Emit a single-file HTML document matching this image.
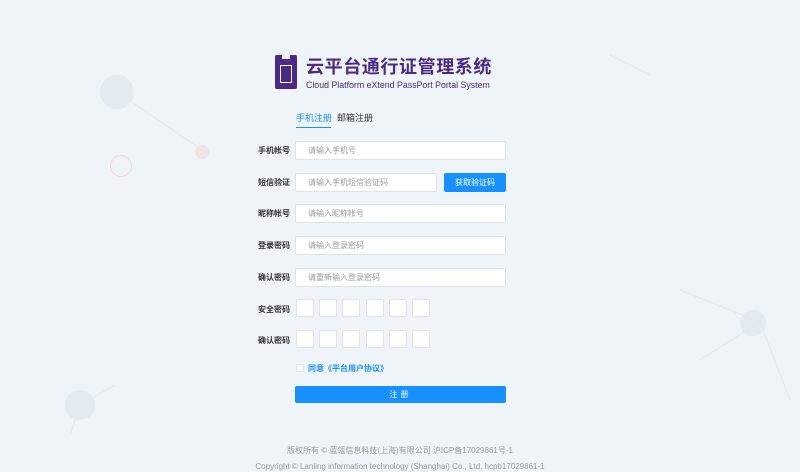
<!DOCTYPE html><html><head><meta charset="utf-8"><style>
body{margin:0;width:800px;height:472px;background:#eef4f8;font-family:"Liberation Sans","Noto Sans CJK SC",sans-serif;position:relative;overflow:hidden}
.a{position:absolute}
.lbl{position:absolute;left:258px;font-size:8px;color:#333;font-weight:bold}
.in{position:absolute;left:295px;width:209px;height:17px;background:#fff;border:1px solid #dde3e8;border-radius:2px;font-size:8px;color:#999;line-height:17px;text-indent:12px}
.bx{position:absolute;width:16px;height:16px;background:#fff;border:1px solid #dde3e8;border-radius:2px}
.dot{position:absolute;border-radius:50%;background:#e3eaf0}
</style></head><body>
<div class="dot" style="left:100px;top:75px;width:34px;height:34px"></div>
<div class="dot" style="left:110px;top:155px;width:20px;height:20px;border:1px solid #f3d6d6;background:none"></div>
<div class="dot" style="left:195px;top:145px;width:14px;height:14px;background:#f3e2e2"></div>
<div class="dot" style="left:65px;top:390px;width:30px;height:30px"></div>
<div class="dot" style="left:740px;top:310px;width:26px;height:26px"></div>
<svg class="a" style="left:0;top:0" width="800" height="472"><g stroke="#e1e8ee" stroke-width="1" fill="none"><line x1="117" y1="92" x2="205" y2="152"/><line x1="610" y1="55" x2="650" y2="75"/><line x1="680" y1="290" x2="760" y2="322"/><line x1="760" y1="322" x2="790" y2="400"/><line x1="700" y1="360" x2="760" y2="322"/><line x1="80" y1="405" x2="115" y2="385"/><line x1="80" y1="405" x2="70" y2="435"/></g></svg>
<div class="a" style="left:275px;top:55px;width:22px;height:34px;background:#4b2a85;border-radius:2px"></div>
<div class="a" style="left:282px;top:55px;width:8px;height:4px;background:#eef4f8"></div>
<div class="a" style="left:280px;top:65px;width:12px;height:18px;border:1.5px solid #fff;box-sizing:border-box"></div>
<div class="a" style="left:306px;top:57px;font-size:18px;line-height:20px;font-weight:bold;color:#4b2a85;letter-spacing:0.6px;white-space:nowrap">云平台通行证管理系统</div>
<div class="a" style="left:306px;top:80px;font-size:8.8px;line-height:10px;color:#4b2a85;white-space:nowrap">Cloud Platform eXtend PassPort Portal System</div>
<div class="a" style="left:296px;top:111px;font-size:9px;color:#1890ff">手机注册</div>
<div class="a" style="left:337px;top:111px;font-size:9px;color:#333">邮箱注册</div>
<div class="a" style="left:296px;top:127px;width:35px;height:1px;background:#1890ff"></div>
<div class="lbl" style="top:145px">手机帐号</div><div class="in" style="top:141px">请输入手机号</div>
<div class="lbl" style="top:177px">短信验证</div><div class="in" style="top:173px;width:140px">请输入手机短信验证码</div>
<div class="a" style="left:444px;top:173px;width:62px;height:19px;background:#1890ff;border-radius:2px;color:#fff;font-size:8px;line-height:19px;text-align:center">获取验证码</div>
<div class="lbl" style="top:208px">昵称帐号</div><div class="in" style="top:204px">请输入昵称帐号</div>
<div class="lbl" style="top:240px">登录密码</div><div class="in" style="top:236px">请输入登录密码</div>
<div class="lbl" style="top:272px">确认密码</div><div class="in" style="top:268px">请重新输入登录密码</div>
<div class="lbl" style="top:304px">安全密码</div>
<div class="bx" style="left:296px;top:299px"></div><div class="bx" style="left:319px;top:299px"></div><div class="bx" style="left:342px;top:299px"></div><div class="bx" style="left:366px;top:299px"></div><div class="bx" style="left:389px;top:299px"></div><div class="bx" style="left:412px;top:299px"></div>
<div class="lbl" style="top:335px">确认密码</div>
<div class="bx" style="left:296px;top:330px"></div><div class="bx" style="left:319px;top:330px"></div><div class="bx" style="left:342px;top:330px"></div><div class="bx" style="left:366px;top:330px"></div><div class="bx" style="left:389px;top:330px"></div><div class="bx" style="left:412px;top:330px"></div>
<div class="a" style="left:296px;top:364px;width:6px;height:6px;background:#fff;border:1px solid #dde3e8;border-radius:1px"></div>
<div class="a" style="left:308px;top:363px;font-size:8px;color:#1890ff;font-weight:bold">同意《平台用户协议》</div>
<div class="a" style="left:295px;top:386px;width:211px;height:17px;background:#1890ff;border-radius:2px;color:#fff;font-size:8px;line-height:17px;text-align:center;letter-spacing:3px">注册</div>
<div class="a" style="left:0;width:800px;top:445px;font-size:8px;color:#999;text-align:center">版权所有 © 蓝瓴信息科技(上海)有限公司 沪ICP备17029861号-1</div>
<div class="a" style="left:0;width:800px;top:462px;font-size:8px;color:#999;text-align:center">Copyright © Lanling information technology (Shanghai) Co., Ltd. hcpb17029861-1</div>
</body></html>
